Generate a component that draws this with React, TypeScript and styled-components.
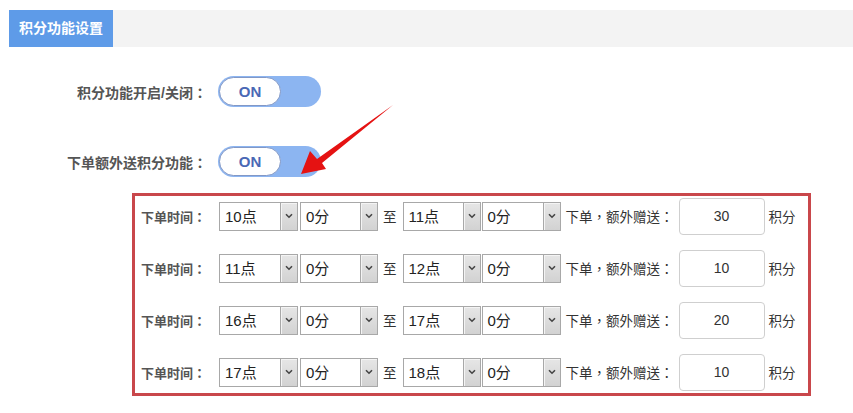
import styled, { createGlobalStyle } from "styled-components"

const GlobalStyle = createGlobalStyle`
  html, body {
    margin: 0;
    padding: 0;
    background: #fff;
    font-family: "Liberation Sans", "Noto Sans CJK SC", sans-serif;
  }
`

const Page = styled.div`
  position: relative;
  width: 853px;
  height: 413px;
  padding-top: 10px;
  box-sizing: border-box;
  overflow: hidden;
`

const HeaderBar = styled.div`
  display: flex;
  margin-left: 9px;
  height: 37px;
  background: #f3f3f3;
`

const HeaderTab = styled.div`
  width: 104px;
  padding-left: 10px;
  box-sizing: border-box;
  background: #5e9be8;
  color: #fff;
  font-size: 14px;
  font-weight: bold;
  line-height: 37px;
`

const SettingRow = styled.div<{ $top: number }>`
  display: flex;
  align-items: center;
  margin-top: ${(p) => p.$top}px;
  height: 31px;
`

const SettingLabel = styled.div`
  width: 207px;
  text-align: right;
  color: #555;
  font-size: 14px;
  font-weight: bold;
`

// traditional-chinese font keeps full-width punctuation centred in its cell
const Punct = styled.span`
  font-family: "Noto Sans CJK TC", "Noto Sans CJK SC", sans-serif;
`

const Toggle = styled.div`
  display: flex;
  margin-left: 11px;
  width: 103px;
  height: 31px;
  padding: 1px;
  box-sizing: border-box;
  border-radius: 16px;
  background: #8cb5f1;
`

const Knob = styled.div`
  display: flex;
  align-items: center;
  justify-content: center;
  width: 62px;
  height: 29px;
  box-sizing: border-box;
  border: 1.5px solid #8298c6;
  border-radius: 15px;
  background: #fff;
  color: #4a68b5;
  font-size: 15px;
  font-weight: bold;
`

const RuleBox = styled.div`
  display: flex;
  flex-direction: column;
  gap: 12px;
  margin: 16px 0 0 132px;
  width: 679px;
  padding: 0 0 1px 6px;
  box-sizing: border-box;
  border: 3px solid #c9474b;
`

const RuleRow = styled.div`
  display: flex;
  align-items: center;
  height: 40px;
`

const RuleLabel = styled.div`
  width: 78px;
  color: #555;
  font-size: 13px;
  font-weight: bold;
`

const SelectBox = styled.div<{ $ml: number; $w: number }>`
  display: flex;
  margin-left: ${(p) => p.$ml}px;
  width: ${(p) => p.$w}px;
  height: 29px;
  box-sizing: border-box;
  border: 1px solid #a8a8a8;
  background: #fff;
`

const SelectValue = styled.div`
  flex: 1;
  padding-left: 5px;
  color: #222;
  font-size: 15px;
  line-height: 27px;
`

const SelectArrow = styled.div`
  display: flex;
  align-items: center;
  justify-content: center;
  width: 16px;
  border-left: 1px solid #a8a8a8;
  background: linear-gradient(#e6e6e6, #d2d2d2);
  box-shadow: inset 1px 1px 0 #f4f4f4;
`

const Text = styled.span<{ $ml: number }>`
  margin-left: ${(p) => p.$ml}px;
  color: #333;
  font-size: 13.5px;
  white-space: nowrap;
`

const PointsInput = styled.input`
  margin-left: 5px;
  width: 86px;
  height: 37px;
  box-sizing: border-box;
  border: 1px solid #cfcfcf;
  border-radius: 4px;
  text-align: center;
  color: #333;
  font-family: "Liberation Sans", sans-serif;
  font-size: 14px;
  outline: none;
`

const Arrow = styled.svg`
  position: absolute;
  left: 290px;
  top: 95px;
`

const Chevron = () => (
  <svg width="8" height="6" viewBox="0 0 8 6">
    <path d="M1 1.2 L4 4.2 L7 1.2" fill="none" stroke="#444" strokeWidth="1.6" />
  </svg>
)

const Select = ({ value, ml, w }: { value: string; ml: number; w: number }) => (
  <SelectBox $ml={ml} $w={w}>
    <SelectValue>{value}</SelectValue>
    <SelectArrow>
      <Chevron />
    </SelectArrow>
  </SelectBox>
)

const rules = [
  { from: "10点", to: "11点", points: "30" },
  { from: "11点", to: "12点", points: "10" },
  { from: "16点", to: "17点", points: "20" },
  { from: "17点", to: "18点", points: "10" },
]

export default function App() {
  return (
    <Page>
      <GlobalStyle />
      <HeaderBar>
        <HeaderTab>积分功能设置</HeaderTab>
      </HeaderBar>

      <SettingRow $top={29}>
        <SettingLabel>
          积分功能开启/关闭<Punct>：</Punct>
        </SettingLabel>
        <Toggle>
          <Knob>ON</Knob>
        </Toggle>
      </SettingRow>

      <SettingRow $top={39}>
        <SettingLabel>
          下单额外送积分功能<Punct>：</Punct>
        </SettingLabel>
        <Toggle>
          <Knob>ON</Knob>
        </Toggle>
      </SettingRow>

      <RuleBox>
        {rules.map((r, i) => (
          <RuleRow key={i}>
            <RuleLabel>
              下单时间<Punct>：</Punct>
            </RuleLabel>
            <Select value={r.from} ml={0} w={79} />
            <Select value="0分" ml={2} w={78} />
            <Text $ml={5}>至</Text>
            <Select value={r.to} ml={6} w={78} />
            <Select value="0分" ml={1} w={79} />
            <Text $ml={5}>
              下单<Punct>，</Punct>额外赠送<Punct>：</Punct>
            </Text>
            <PointsInput defaultValue={r.points} readOnly />
            <Text $ml={4}>积分</Text>
          </RuleRow>
        ))}
      </RuleBox>

      <Arrow width="110" height="90" viewBox="0 0 110 90">
        <polygon points="11,79 20,56 27,64 103,10 32,68 36,74" fill="#e51212" />
      </Arrow>
    </Page>
  )
}
